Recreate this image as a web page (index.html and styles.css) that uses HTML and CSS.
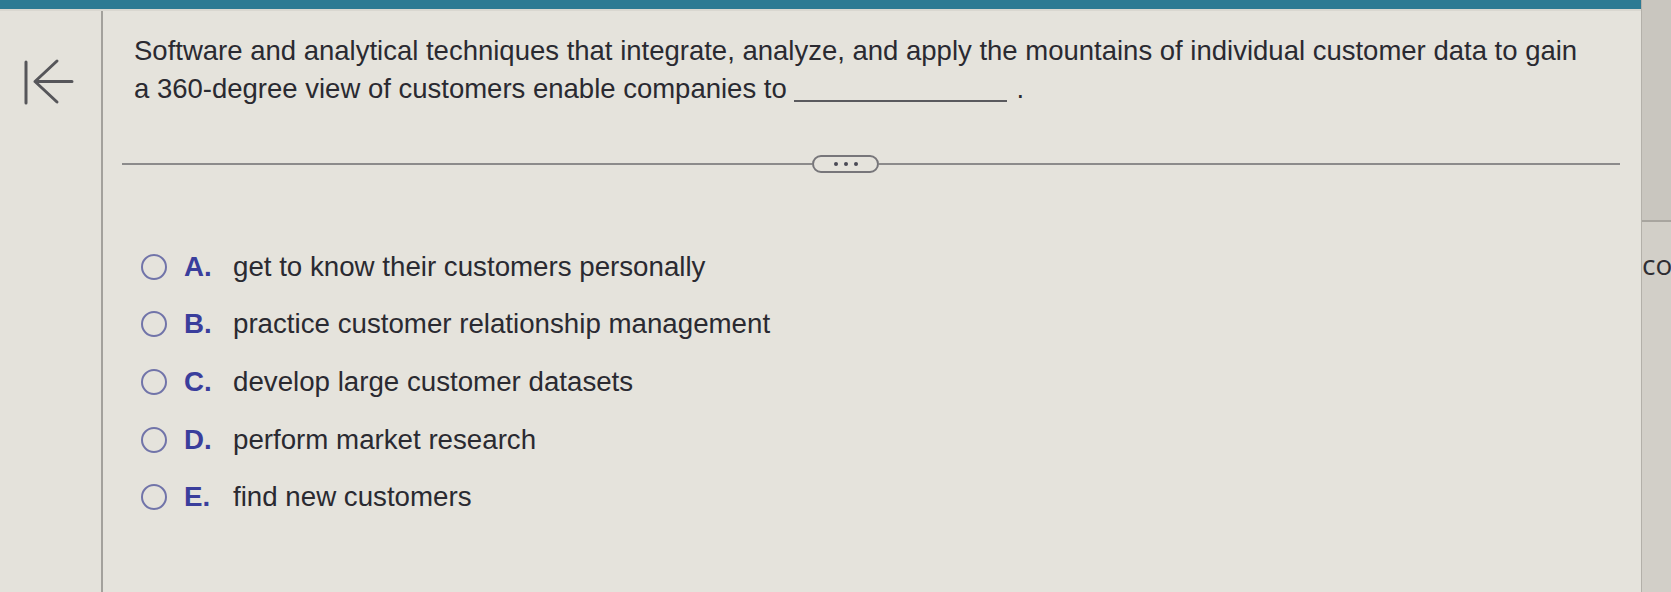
FILE: index.html
```html
<!DOCTYPE html>
<html lang="en">
<head>
<meta charset="utf-8">
<title>Question</title>
<link rel="stylesheet" href="styles.css">
</head>
<body>
<div class="app">
  <div class="frame">
    <div class="topbar"></div>
    <div class="content">
      <div class="leftpanel">
        <svg class="back" width="54" height="50" viewBox="0 0 54 50" aria-hidden="true">
          <path d="M4 4 V45" />
          <path d="M35 3 L13 23.5 L35 44 M13 23.5 H50" />
        </svg>
      </div>
      <div class="main">
        <p class="question">Software and analytical techniques that integrate, analyze, and apply the mountains of individual customer data to gain a 360-degree view of customers enable companies to <span class="blank"></span>.</p>
        <div class="divider">
          <div class="rule rule-left"></div>
          <div class="pill"><span class="dot"></span><span class="dot"></span><span class="dot"></span></div>
          <div class="rule rule-right"></div>
        </div>
        <ul class="options">
          <li class="option"><span class="radio"></span><span class="letter">A.</span><span class="text">get to know their customers personally</span></li>
          <li class="option"><span class="radio"></span><span class="letter">B.</span><span class="text">practice customer relationship management</span></li>
          <li class="option"><span class="radio"></span><span class="letter">C.</span><span class="text">develop large customer datasets</span></li>
          <li class="option"><span class="radio"></span><span class="letter">D.</span><span class="text">perform market research</span></li>
          <li class="option"><span class="radio"></span><span class="letter">E.</span><span class="text">find new customers</span></li>
        </ul>
      </div>
    </div>
  </div>
  <div class="side">
    <div class="side-head"></div>
    <div class="side-body"><span class="side-text">co</span></div>
  </div>
</div>
</body>
</html>
```
FILE: styles.css
```css
* { box-sizing: border-box; }
html, body { margin: 0; padding: 0; }
body {
  width: 1671px;
  height: 592px;
  overflow: hidden;
  background: #e5e3dc;
  font-family: "Liberation Sans", Arial, sans-serif;
  color: #2b2b31;
}
.app {
  display: flex;
  width: 1671px;
  height: 592px;
}
.frame {
  width: 1642px;
  display: flex;
  flex-direction: column;
  border-right: 1px solid #b3b0a9;
}
.topbar {
  height: 11px;
  background: #2c7a93;
  border-bottom: 2px solid #d9d7d0;
}
.content {
  flex: 1;
  display: flex;
}
.leftpanel {
  width: 103px;
  border-right: 2px solid #a3a19c;
  padding: 47px 0 0 22px;
  background: #e4e2db;
}
.back {
  display: block;
  fill: none;
  stroke: #56565a;
  stroke-width: 3;
  stroke-linecap: round;
  stroke-linejoin: round;
}
.main {
  flex: 1;
  padding: 21px 21px 0 0;
}
.question {
  margin: 0 0 0 31px;
  width: 1462px;
  font-size: 27.5px;
  line-height: 37.5px;
  color: #2a2a31;
}
.blank {
  display: inline-block;
  width: 213px;
  height: 2px;
  background: #5a5a5e;
  vertical-align: -4px;
  margin-right: 9px;
}
.divider {
  display: flex;
  align-items: center;
  margin: 48px 0 0 19px;
  height: 18px;
}
.rule {
  height: 2px;
  background: #8c8b8b;
}
.rule-left { width: 690px; }
.rule-right { flex: 1; }
.pill {
  width: 67px;
  height: 18px;
  border: 2px solid #77767a;
  border-radius: 9px;
  display: flex;
  justify-content: center;
  align-items: center;
  gap: 6px;
}
.dot {
  width: 4px;
  height: 4px;
  border-radius: 50%;
  background: #4a4a55;
}
.options {
  list-style: none;
  margin: 65px 0 0 0;
  padding: 0 0 0 38px;
}
.option {
  display: flex;
  align-items: center;
  height: 57.6px;
  font-size: 27.7px;
}
.radio {
  width: 26px;
  height: 26px;
  border: 2.5px solid #7174a9;
  border-radius: 50%;
  flex: none;
  margin-right: 17px;
}
.letter {
  width: 49px;
  font-weight: bold;
  color: #3a3e9c;
  flex: none;
}
.text {
  color: #2a2a31;
}
.side {
  flex: 1;
  display: flex;
  flex-direction: column;
  overflow: hidden;
}
.side-head {
  height: 222px;
  background: #c9c6bf;
  border-bottom: 2px solid #a8a59f;
}
.side-body {
  flex: 1;
  background: #d2cfc8;
  padding-top: 24px;
  white-space: nowrap;
}
.side-text {
  font-family: "Open Sans", "Liberation Sans", sans-serif;
  font-size: 28px;
  line-height: 36px;
  color: #2e2e33;
}
```
